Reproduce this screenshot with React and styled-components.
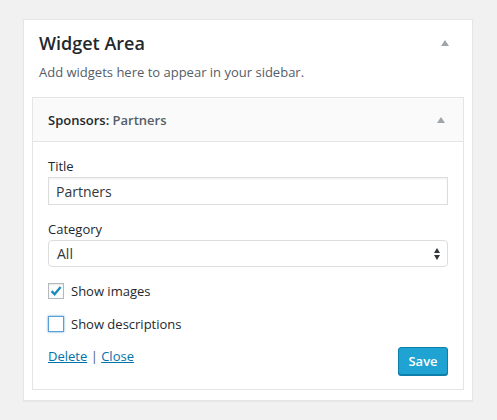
import React from "react";
import styled, { createGlobalStyle } from "styled-components";

const Global = createGlobalStyle`
  body {
    margin: 0;
    background: #f1f1f1;
    font-family: "Open Sans", "Liberation Sans", sans-serif;
    color: #23282d;
  }
`;

const Page = styled.div`
  padding: 19px 24px 18px 23px;
`;

const Sidebar = styled.div`
  width: 448px;
  background: #fff;
  border: 1px solid #e5e5e5;
  box-shadow: 0 1px 1px rgba(0, 0, 0, 0.04);
  padding: 0 0 10px;
`;

const SidebarHead = styled.div`
  display: flex;
  align-items: center;
  justify-content: space-between;
  padding: 10px 23px 0 15px;
`;

const SidebarTitle = styled.h2`
  margin: 0;
  font-size: 18px;
  line-height: 26px;
  font-weight: 600;
  color: #23282d;
`;

const Arrow = styled.span`
  width: 0;
  height: 0;
  border-left: 4px solid transparent;
  border-right: 4px solid transparent;
  border-bottom: 6px solid #a0a5aa;
`;

const Description = styled.p`
  margin: 7px 0 16px 15px;
  font-size: 13px;
  line-height: 18px;
  color: #555d66;
`;

const Widget = styled.div`
  margin: 0 8px;
  border: 1px solid #e5e5e5;
  background: #fff;
`;

const WidgetTop = styled.div`
  display: flex;
  align-items: center;
  justify-content: space-between;
  height: 43px;
  padding: 0 18px 0 15px;
  background: #fafafa;
  border-bottom: 1px solid #e5e5e5;
`;

const WidgetName = styled.h3`
  margin: 0;
  font-size: 13px;
  font-weight: 600;
  color: #23282d;

  span {
    color: #555d66;
  }
`;

const WidgetBody = styled.div`
  padding: 14px 15px 14px;
`;

const Field = styled.div`
  display: flex;
  flex-direction: column;
  margin-bottom: ${(p) => p.$gap}px;
`;

const Label = styled.label`
  font-size: 13px;
  line-height: 20px;
  color: #23282d;
  margin-bottom: 1px;
`;

const TextInput = styled.input`
  box-sizing: border-box;
  width: 400px;
  height: 28px;
  margin: 0;
  padding: 0 7px;
  border: 1px solid #ddd;
  box-shadow: inset 0 1px 2px rgba(0, 0, 0, 0.07);
  font-family: "Open Sans", "Liberation Sans", sans-serif;
  font-size: 14px;
  color: #32373c;
  outline: none;
`;

const Select = styled.div`
  box-sizing: border-box;
  display: flex;
  align-items: center;
  justify-content: space-between;
  width: 400px;
  height: 27px;
  padding: 0 7px 0 8px;
  border: 1px solid #ddd;
  border-radius: 4px;
  background: #fff;
  font-size: 14px;
  color: #32373c;
`;

const Updown = styled.span`
  display: flex;
  flex-direction: column;
  gap: 2px;

  &::before,
  &::after {
    content: "";
    width: 0;
    height: 0;
    border-left: 3.5px solid transparent;
    border-right: 3.5px solid transparent;
  }
  &::before {
    border-bottom: 5px solid #32373c;
  }
  &::after {
    border-top: 5px solid #32373c;
  }
`;

const CheckRow = styled.label`
  display: flex;
  align-items: center;
  gap: 7px;
  height: 18px;
  font-size: 13px;
  color: #23282d;
  margin-bottom: ${(p) => p.$gap}px;
`;

const Box = styled.span`
  box-sizing: border-box;
  display: flex;
  align-items: center;
  justify-content: center;
  width: 16px;
  height: 16px;
  border: 1px solid ${(p) => (p.$focus ? "#5b9dd9" : "#b4b9be")};
  box-shadow: ${(p) =>
    p.$focus
      ? "0 0 2px rgba(30, 140, 190, 0.8)"
      : "inset 0 1px 2px rgba(0, 0, 0, 0.1)"};
  background: #fff;
`;

const Actions = styled.div`
  display: flex;
  justify-content: space-between;
  align-items: flex-start;
`;

const Links = styled.div`
  font-size: 13px;
  color: #555d66;

  a {
    color: #0073aa;
    text-decoration: underline;
  }
`;

const SaveButton = styled.button`
  box-sizing: border-box;
  width: 50px;
  height: 28px;
  margin: 0;
  background: #1ea3d3;
  border: 1px solid #0e7eaa;
  border-radius: 3px;
  box-shadow: 0 1px 0 #0e7eaa;
  color: #fff;
  font-family: "Open Sans", "Liberation Sans", sans-serif;
  font-size: 13px;
  font-weight: 600;
  cursor: pointer;
`;

const Check = () => (
  <svg width="14" height="14" viewBox="0 0 14 14">
    <path d="M2.5 7.2 L5.6 10.2 L11.6 3" fill="none" stroke="#1e8cbe" strokeWidth="2.4" />
  </svg>
);

export default function App() {
  return (
    <Page>
      <Global />
      <Sidebar>
        <SidebarHead>
          <SidebarTitle>Widget Area</SidebarTitle>
          <Arrow />
        </SidebarHead>
        <Description>Add widgets here to appear in your sidebar.</Description>
        <Widget>
          <WidgetTop>
            <WidgetName>
              Sponsors: <span>Partners</span>
            </WidgetName>
            <Arrow />
          </WidgetTop>
          <WidgetBody>
            <Field $gap={14}>
              <Label>Title</Label>
              <TextInput defaultValue="Partners" />
            </Field>
            <Field $gap={15}>
              <Label>Category</Label>
              <Select>
                All
                <Updown />
              </Select>
            </Field>
            <CheckRow $gap={15}>
              <Box>
                <Check />
              </Box>
              Show images
            </CheckRow>
            <CheckRow $gap={14}>
              <Box $focus />
              Show descriptions
            </CheckRow>
            <Actions>
              <Links>
                <a>Delete</a> | <a>Close</a>
              </Links>
              <SaveButton>Save</SaveButton>
            </Actions>
          </WidgetBody>
        </Widget>
      </Sidebar>
    </Page>
  );
}
